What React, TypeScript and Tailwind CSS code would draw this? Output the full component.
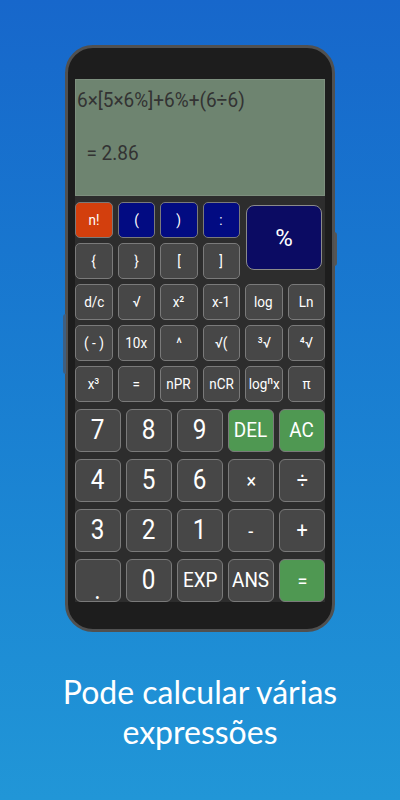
import React from "react";

const fnRows: { label: string; tone?: "red" | "blue" }[][] = [
  [{ label: "n!", tone: "red" }, { label: "(", tone: "blue" }, { label: ")", tone: "blue" }, { label: ":", tone: "blue" }],
  [{ label: "{" }, { label: "}" }, { label: "[" }, { label: "]" }],
  [{ label: "d/c" }, { label: "√" }, { label: "x²" }, { label: "x-1" }, { label: "log" }, { label: "Ln" }],
  [{ label: "( - )" }, { label: "10x" }, { label: "^" }, { label: "√(" }, { label: "³√" }, { label: "⁴√" }],
  [{ label: "x³" }, { label: "=" }, { label: "nPR" }, { label: "nCR" }, { label: "logⁿx" }, { label: "π" }],
];

const numRows: { label: string; green?: boolean; size?: string }[][] = [
  [{ label: "7" }, { label: "8" }, { label: "9" }, { label: "DEL", green: true, size: "text-[21px]" }, { label: "AC", green: true, size: "text-[21px]" }],
  [{ label: "4" }, { label: "5" }, { label: "6" }, { label: "×", size: "text-[20px]" }, { label: "÷", size: "text-[22px]" }],
  [{ label: "3" }, { label: "2" }, { label: "1" }, { label: "-", size: "text-[20px]" }, { label: "+", size: "text-[22px]" }],
  [{ label: "." }, { label: "0" }, { label: "EXP", size: "text-[21px]" }, { label: "ANS", size: "text-[21px]" }, { label: "=", green: true, size: "text-[20px]" }],
];

function FnKey({ label, tone }: { label: string; tone?: "red" | "blue" }) {
  const bg = tone === "red" ? "bg-[#d33f0d]" : tone === "blue" ? "bg-[#020b82]" : "bg-[#474747]";
  return (
    <div className={`${bg} h-[36px] rounded-[5px] border border-[#7a7a7a] flex items-center justify-center text-white text-[15px]`}>
      <span className="inline-block scale-x-90">{label}</span>
    </div>
  );
}

function NumKey({ label, green, size }: { label: string; green?: boolean; size?: string }) {
  const bg = green ? "bg-[#4f9852]" : "bg-[#474747]";
  const isDot = label === ".";
  return (
    <div
      className={`${bg} h-[43px] rounded-[6px] border border-[#7a7a7a] flex items-center justify-center text-white ${size ?? "text-[27px]"}`}
    >
      <span className={`inline-block scale-x-90 ${isDot ? "translate-y-[10px]" : ""}`}>{label}</span>
    </div>
  );
}

export default function App() {
  return (
    <div
      className="w-[400px] h-[800px] bg-gradient-to-b from-[#1767cb] to-[#2196d7] flex flex-col items-center overflow-hidden"
      style={{ fontFamily: "Roboto, 'Liberation Sans', sans-serif" }}
    >
      {/* PHONE */}
      <div className="relative mt-[45px] w-[270px] h-[587px] rounded-[28px] border-[3px] border-[#505050] bg-[#1d1d1d] px-[7px] pt-[31px] pb-[27px] flex flex-col">
        <div className="absolute -right-[5px] top-[184px] w-[3px] h-[34px] rounded-r bg-[#555]" />
        <div className="absolute -left-[5px] top-[266px] w-[3px] h-[60px] rounded-l bg-[#3f5f80]" />

        {/* LCD */}
        <div className="h-[117px] bg-[#6e8470] border border-[#7d8f7e] text-[#333] text-[20px] leading-none">
          <div className="pl-[1px] pt-[10px] origin-left scale-x-95">6×[5×6%]+6%+(6÷6)</div>
          <div className="pl-[11px] pt-[33px] origin-left scale-x-95">= 2.86</div>
        </div>

        {/* KEYPAD */}
        <div className="flex-1 bg-[#2d2d2d] pt-[6px] flex flex-col gap-[7px]">
          <div className="grid grid-cols-6 gap-x-[5px] gap-y-[5px]">
            {fnRows[0].map((k) => (
              <FnKey key={k.label} {...k} />
            ))}
            <div className="col-span-2 row-span-2 mt-[3px] mb-[9px] ml-[1px] mr-[3px] rounded-[8px] border border-[#8a8a8a] bg-[#0b0b63] flex items-center justify-center text-white text-[24px]">
              %
            </div>
            {fnRows.slice(1).flat().map((k, i) => (
              <FnKey key={i} {...k} />
            ))}
          </div>
          <div className="grid grid-cols-5 gap-x-[5px] gap-y-[7px]">
            {numRows.flat().map((k, i) => (
              <NumKey key={i} {...k} />
            ))}
          </div>
        </div>
      </div>

      {/* CAPTION */}
      <div
        className="mt-[40px] text-white text-[32px] leading-[40px] text-center"
        style={{ fontFamily: "Lato, 'Liberation Sans', sans-serif" }}
      >
        <div>Pode calcular várias</div>
        <div>expressões</div>
      </div>
    </div>
  );
}
